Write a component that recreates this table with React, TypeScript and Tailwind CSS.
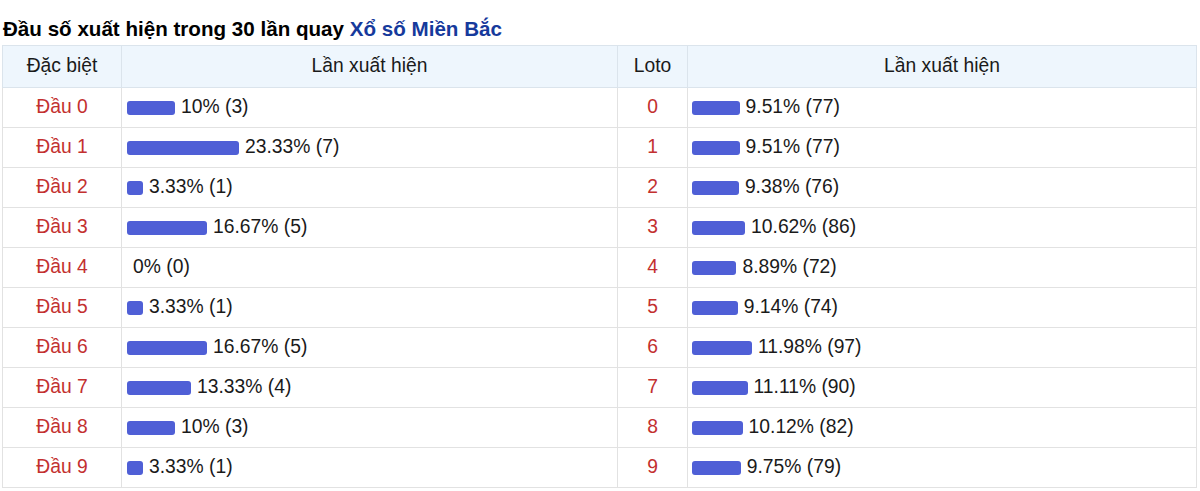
const dacBiet = [
  { pct: '10', n: 3 },
  { pct: '23.33', n: 7 },
  { pct: '3.33', n: 1 },
  { pct: '16.67', n: 5 },
  { pct: '0', n: 0 },
  { pct: '3.33', n: 1 },
  { pct: '16.67', n: 5 },
  { pct: '13.33', n: 4 },
  { pct: '10', n: 3 },
  { pct: '3.33', n: 1 },
];

const loto = [
  { pct: '9.51', n: 77 },
  { pct: '9.51', n: 77 },
  { pct: '9.38', n: 76 },
  { pct: '10.62', n: 86 },
  { pct: '8.89', n: 72 },
  { pct: '9.14', n: 74 },
  { pct: '11.98', n: 97 },
  { pct: '11.11', n: 90 },
  { pct: '10.12', n: 82 },
  { pct: '9.75', n: 79 },
];

function Bar({ pct, n, scale }: { pct: string; n: number; scale: number }) {
  return (
    <div className="flex items-center">
      <span
        className="inline-block h-[14px] rounded-[3px] bg-[#4f5fd6] mr-[6px]"
        style={{ width: parseFloat(pct) * scale }}
      />
      <span>
        {pct}% ({n})
      </span>
    </div>
  );
}

export default function App() {
  return (
    <div className="bg-white text-[#1a1a1a] pt-[16px] px-[2px]" style={{ fontFamily: '"Liberation Sans", Arial, sans-serif' }}>
      <h2 className="text-[20.6px] font-bold leading-[26px] pl-[1px] text-black">
        Đầu số xuất hiện trong 30 lần quay <span className="text-[#163a9c]">Xổ số Miền Bắc</span>
      </h2>
      <table className="mt-[3px] w-[1195px] border-collapse text-[19.3px]">
        <thead>
          <tr className="bg-[#eef6fd] h-[42px]">
            <th className="w-[119px] border border-[#dbe4ec] font-normal text-center">Đặc biệt</th>
            <th className="w-[496px] border border-[#dbe4ec] font-normal text-center">Lần xuất hiện</th>
            <th className="w-[70px] border border-[#dbe4ec] font-normal text-center">Loto</th>
            <th className="border border-[#dbe4ec] font-normal text-center">Lần xuất hiện</th>
          </tr>
        </thead>
        <tbody>
          {dacBiet.map((d, i) => (
            <tr key={i} className="h-[40px]">
              <td className="border border-[#e2e2e2] text-center text-[#c3302f]">Đầu {i}</td>
              <td className="border border-[#e2e2e2] pl-[5px]">
                <Bar pct={d.pct} n={d.n} scale={4.8} />
              </td>
              <td className="border border-[#e2e2e2] text-center text-[#c3302f]">{i}</td>
              <td className="border border-[#e2e2e2] pl-[4px]">
                <Bar pct={loto[i].pct} n={loto[i].n} scale={5} />
              </td>
            </tr>
          ))}
        </tbody>
      </table>
    </div>
  );
}
